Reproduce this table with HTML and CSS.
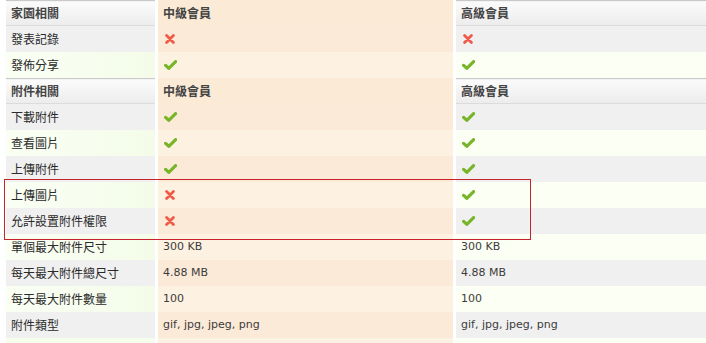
FILE: index.html
```html
<!DOCTYPE html>
<html>
<head>
<meta charset="utf-8">
<link rel="stylesheet" href="styles.css">
</head>
<body>
<svg class="defs" width="0" height="0">
  <symbol id="no" viewBox="0 0 10 10">
    <path d="M1.6 1.6 L8.4 8.4 M8.4 1.6 L1.6 8.4" stroke="#f05a48" stroke-width="2.8" stroke-linecap="round"/>
  </symbol>
  <symbol id="yes" viewBox="0 0 13 10">
    <path d="M1.6 5.4 L4.8 8.3 L11.6 1.6" fill="none" stroke="#78b52a" stroke-width="3.2" stroke-linecap="round" stroke-linejoin="round"/>
  </symbol>
</svg>
<div class="wrap">
<table class="perm">
  <tr class="head">
    <th>家園相關</th>
    <th class="mid">中級會員</th>
    <th>高級會員</th>
  </tr>
  <tr class="grey">
    <td>發表記錄</td>
    <td class="mid"><svg class="ico no"><use href="#no"/></svg></td>
    <td><svg class="ico no"><use href="#no"/></svg></td>
  </tr>
  <tr class="light">
    <td>發佈分享</td>
    <td class="mid"><svg class="ico yes"><use href="#yes"/></svg></td>
    <td><svg class="ico yes"><use href="#yes"/></svg></td>
  </tr>
  <tr class="head">
    <th>附件相關</th>
    <th class="mid">中級會員</th>
    <th>高級會員</th>
  </tr>
  <tr class="grey">
    <td>下載附件</td>
    <td class="mid"><svg class="ico yes"><use href="#yes"/></svg></td>
    <td><svg class="ico yes"><use href="#yes"/></svg></td>
  </tr>
  <tr class="light">
    <td>查看圖片</td>
    <td class="mid"><svg class="ico yes"><use href="#yes"/></svg></td>
    <td><svg class="ico yes"><use href="#yes"/></svg></td>
  </tr>
  <tr class="grey">
    <td>上傳附件</td>
    <td class="mid"><svg class="ico yes"><use href="#yes"/></svg></td>
    <td><svg class="ico yes"><use href="#yes"/></svg></td>
  </tr>
  <tr class="light">
    <td>上傳圖片</td>
    <td class="mid"><svg class="ico no"><use href="#no"/></svg></td>
    <td><svg class="ico yes"><use href="#yes"/></svg></td>
  </tr>
  <tr class="grey">
    <td>允許設置附件權限</td>
    <td class="mid"><svg class="ico no"><use href="#no"/></svg></td>
    <td><svg class="ico yes"><use href="#yes"/></svg></td>
  </tr>
  <tr class="light">
    <td>單個最大附件尺寸</td>
    <td class="mid val">300 KB</td>
    <td class="val">300 KB</td>
  </tr>
  <tr class="grey">
    <td>每天最大附件總尺寸</td>
    <td class="mid val">4.88 MB</td>
    <td class="val">4.88 MB</td>
  </tr>
  <tr class="light">
    <td>每天最大附件數量</td>
    <td class="mid val">100</td>
    <td class="val">100</td>
  </tr>
  <tr class="grey">
    <td>附件類型</td>
    <td class="mid val">gif, jpg, jpeg, png</td>
    <td class="val">gif, jpg, jpeg, png</td>
  </tr>
</table>
<div class="tail"></div>
<div class="mark"></div>
</div>
</body>
</html>
```
FILE: styles.css
```css
body {
  margin: 0;
  overflow: hidden;
  background: #fff;
  font-family: "Noto Sans CJK TC", "DejaVu Sans", sans-serif;
  font-size: 12px;
  color: #2a2a2a;
}

.defs {
  position: absolute;
}

.wrap {
  position: relative;
  padding-left: 6px;
}

.perm {
  border-collapse: collapse;
  width: 700px;
  table-layout: fixed;
}

.perm th,
.perm td {
  height: 26px;
  padding: 0 0 0 5px;
  text-align: left;
  vertical-align: middle;
  line-height: 14px;
}

.perm th:first-child,
.perm td:first-child {
  width: 144px;
}

.perm .mid {
  width: 290px;
  border-left: 3px solid #fff;
  border-right: 3px solid #fff;
}

/* header rows */
.head th {
  height: 24px;
  font-weight: bold;
  color: #444;
  border-top: 1px solid #c9c9c9;
  border-bottom: 1px solid #dcdcdc;
  background: linear-gradient(#fbfbfb, #ececec);
}

.head th.mid {
  background: #fbead6;
  border-top-color: #fbead6;
  border-bottom-color: #fbead6;
}

/* row stripes */
.grey td {
  background: #f0f0f0;
}

.grey td.mid {
  background: #fbead7;
}

.light td {
  background: #fcfff3;
}

.light td:first-child {
  background: linear-gradient(90deg, #fafff4, #f4fce9);
}

.light td.mid {
  background: #fdf1e1;
}

/* last, cut-off stripe under the table */
.tail {
  height: 6px;
  width: 700px;
  background: linear-gradient(90deg, #f6fdec 149px, #fff 149px, #fff 152px, #fdf1e1 152px, #fdf1e1 447px, #fff 447px, #fff 450px, #fcfff3 450px);
}

.val {
  font-family: "DejaVu Sans", sans-serif;
  font-size: 11px;
  color: #3c3c3c;
}

.ico {
  display: block;
}

.ico.no {
  width: 10px;
  height: 10px;
  margin-left: 2px;
}

.ico.yes {
  width: 13px;
  height: 10px;
  margin-left: 1px;
}

/* red annotation box over rows */
.mark {
  position: absolute;
  left: 4px;
  top: 179px;
  width: 525px;
  height: 59px;
  border: 1px solid #c8222a;
}
```
